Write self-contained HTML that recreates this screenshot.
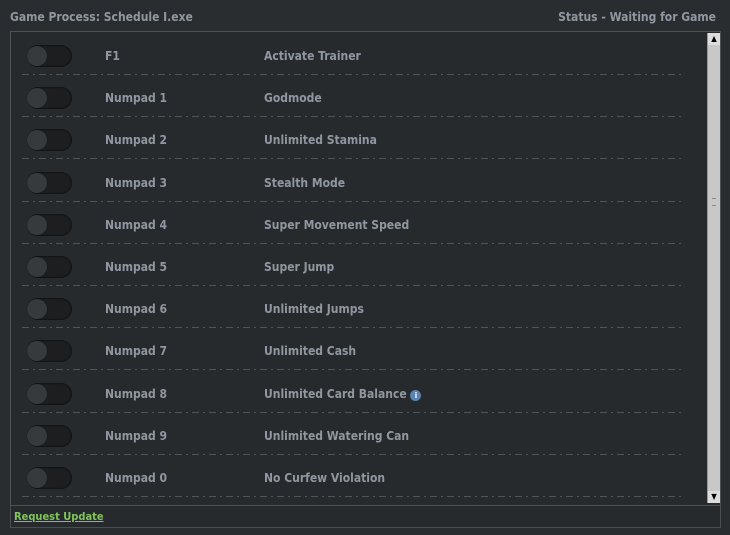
<!DOCTYPE html><html><head><style>
body{margin:0;width:730px;height:535px;background:#2a2d30;font-family:"DejaVu Sans Condensed","Liberation Sans",sans-serif;font-weight:bold;font-size:12px;color:#9097a0;position:relative;overflow:hidden}
.t{position:absolute;top:10px}
#box{position:absolute;left:10px;top:31px;width:711px;height:497px;border:1px solid #4a4e53;box-sizing:border-box;background:#272a2d}
#list{position:absolute;left:10px;top:31px;width:711px;height:475px;border:1px solid #4e5257;box-sizing:border-box}
.tg{position:absolute;left:27px;width:45px;height:22px;border-radius:11px;background:#1c1e20;box-shadow:inset 0 0 2px #000}
.tg:after{content:"";position:absolute;left:0;top:1px;width:20px;height:20px;border-radius:50%;background:#373a3d;box-shadow:0 0 1px #111}
.k{position:absolute;left:105px}.n{position:absolute;left:264px}
.sep{position:absolute;left:22px;width:662px;height:1px;background:repeating-linear-gradient(90deg,#50555a 0 7px,transparent 7px 11px,#50555a 11px 13px,transparent 13px 17px)}
#sb{position:absolute;left:707px;top:33px;width:12px;height:470px;background:#c8c8c8;border-left:1px solid #999}
a{position:absolute;left:14px;top:510px;color:#7fc65a;text-decoration:underline;font-size:11px}
</style></head><body>
<div class="t" style="left:10px">Game Process: Schedule I.exe</div>
<div class="t" style="right:14px">Status - Waiting for Game</div>
<div id="box"></div><div id="list"></div>
<div id="sb"><div style="position:absolute;top:0;left:0;width:12px;height:12px;background:#ddd;font-size:8px;line-height:12px;text-align:center;color:#000">▲</div><div style="position:absolute;bottom:0;left:0;width:12px;height:12px;background:#ddd;font-size:8px;line-height:12px;text-align:center;color:#000">▼</div><div style="position:absolute;top:165px;left:4px;width:4px;height:6px;border-top:1px solid #888;border-bottom:1px solid #888"></div></div>
<div id="rows"></div>
<script>
var d=[["F1","Activate Trainer"],["Numpad 1","Godmode"],["Numpad 2","Unlimited Stamina"],["Numpad 3","Stealth Mode"],["Numpad 4","Super Movement Speed"],["Numpad 5","Super Jump"],["Numpad 6","Unlimited Jumps"],["Numpad 7","Unlimited Cash"],["Numpad 8","Unlimited Card Balance"],["Numpad 9","Unlimited Watering Can"],["Numpad 0","No Curfew Violation"]];
var h="";d.forEach(function(r,i){var c=56+i*42.2;
h+='<div class="tg" style="top:'+(c-11)+'px"></div><div class="k" style="top:'+(c-7)+'px">'+r[0]+'</div><div class="n" style="top:'+(c-7)+'px">'+r[1]+(i==8?' <span style="display:inline-block;width:11px;height:11px;border-radius:50%;background:#5b82b5;color:#fff;font-size:8px;line-height:11px;text-align:center;vertical-align:0">i</span>':'')+'</div><div class="sep" style="top:'+Math.round(c+18)+'px"></div>';});
document.getElementById("rows").innerHTML=h;
</script>
<a>Request Update</a>
</body></html>
